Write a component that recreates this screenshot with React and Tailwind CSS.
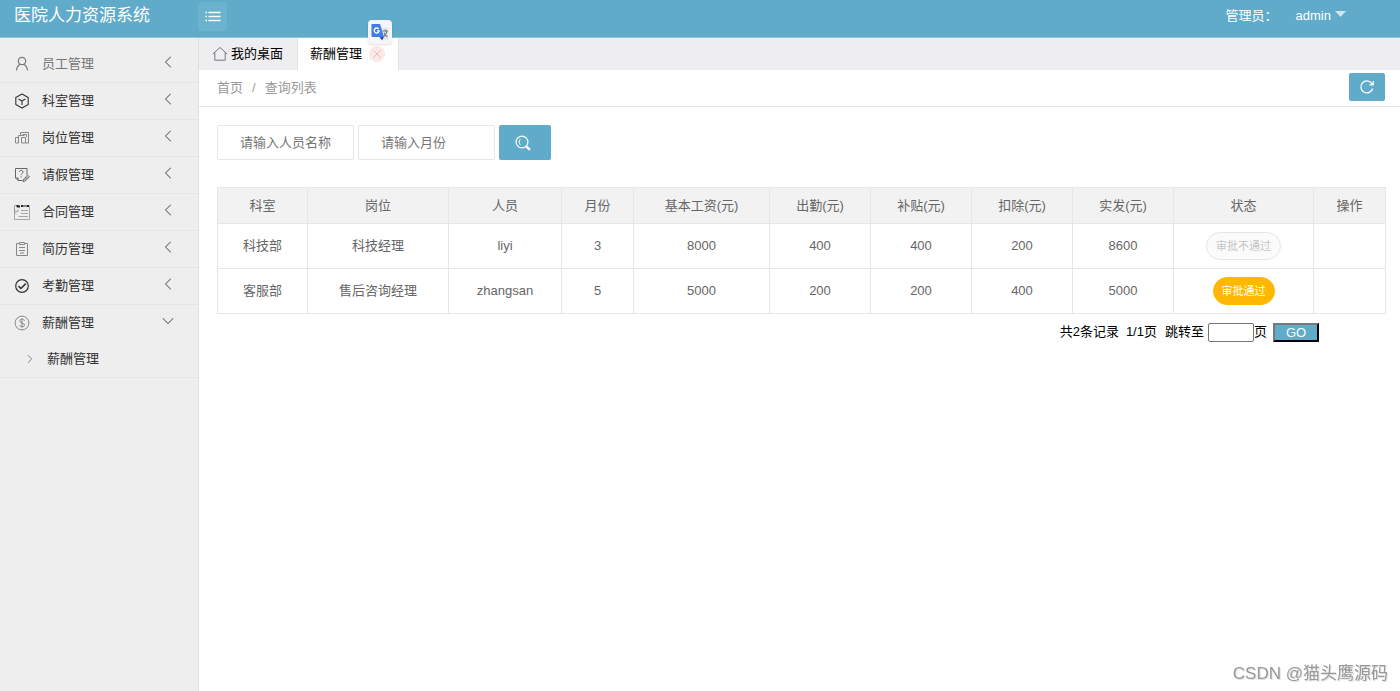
import React from 'react';
import { ChevronDown, ChevronLeft, ChevronRight } from 'lucide-react';

const Icon = ({ children, className = 'w-4 h-4' }) => (
  <svg
    viewBox="0 0 16 16"
    fill="none"
    stroke="currentColor"
    strokeWidth="1"
    strokeLinejoin="round"
    className={className}
    aria-hidden="true"
  >
    {children}
  </svg>
);

const UserIcon = () => (
  <Icon>
    <circle cx="8" cy="5" r="3.700" strokeWidth="1.200" />
    <path d="M2.500 14.500c.2-3.200 1.600-5.200 3.900-6.200M9.600 8.300c2.300 1 3.700 3 3.900 6.200" strokeWidth="1.200" />
  </Icon>
);

const CubeIcon = () => (
  <Icon>
    <path d="M8 1 14.200 4.500v7L8 15 1.800 11.500v-7zM4.500 6 8 8l3.500-2M8 8v4" strokeWidth="1.100" />
  </Icon>
);

const PostIcon = () => (
  <Icon>
    <path d="M1.500 7.500h3V13h-3zM4.500 13V5.500h6M6.500 5.500V2.500h8V13h-3M7.500 7.500h4V13h-4zM8.500 4.500h4V7" />
  </Icon>
);

const LeaveIcon = () => (
  <Icon>
    <path d="M8.500 13.500H4.200L1.500 11V1.500h11.500V8M1.500 11h2.700v2.500" />
    <path d="M5.300 5c.2-2.200 3.800-2 3.700.1C8.900 6.600 7.200 6.500 7.200 8.200M7.200 9.300v1.200" />
    <path d="m9 14.500.5-2.300 4.200-4 1.700 1.700-4.300 4.100zM10.500 13l3.500-3.500" />
  </Icon>
);

const ContractIcon = () => (
  <Icon>
    <path d="M3 1.500H.5v14h15v-14M.5 4.500v3h3.500V5.500M.5 8.500l2 1.500M7 6.500h7M7 9.500h7M4.500 12.500H14" opacity=".7" />
    <path d="M3.500 1v1.500H6M7 2h2.500M10.500 2h1M12.500 2H15" stroke="#222" strokeWidth="2" />
  </Icon>
);

const ResumeIcon = () => (
  <Icon>
    <path d="M5.500 2.500h-3v12h11v-12h-3M5.500 1.500h5v2h-5zM5 6.500h6M5 9.500h6M6 12h4" />
  </Icon>
);

const CheckIcon = () => (
  <Icon>
    <circle cx="8" cy="8" r="6.300" strokeWidth="1.200" />
    <path d="m4.500 8.200 2.400 2.300 4.900-4.900" strokeWidth="1.600" />
  </Icon>
);

const MoneyIcon = () => (
  <Icon>
    <circle cx="8" cy="8" r="6.900" />
    <path d="M10.500 5.800C10 3.700 5.700 3.800 5.700 6c0 2.300 4.800 1.600 4.800 4.100 0 2.200-4.500 2.300-5-.1M8 3.200v9.600" />
  </Icon>
);

const menu = [
  { label: '员工管理', icon: UserIcon, tone: 'text-[#777]' },
  { label: '科室管理', icon: CubeIcon, tone: 'text-[#333]' },
  { label: '岗位管理', icon: PostIcon, tone: 'text-[#333]', iconTone: 'text-[#888]' },
  { label: '请假管理', icon: LeaveIcon, tone: 'text-[#333]', iconTone: 'text-[#666]' },
  { label: '合同管理', icon: ContractIcon, tone: 'text-[#333]', iconTone: 'text-[#888]' },
  { label: '简历管理', icon: ResumeIcon, tone: 'text-[#333]', iconTone: 'text-[#888]' },
  { label: '考勤管理', icon: CheckIcon, tone: 'text-[#333]' },
  { label: '薪酬管理', icon: MoneyIcon, tone: 'text-[#333]', iconTone: 'text-[#888]', children: ['薪酬管理'] },
];

const columns = [
  { title: '科室', width: 'w-[90px]' },
  { title: '岗位', width: 'w-[141px]' },
  { title: '人员', width: 'w-[113px]' },
  { title: '月份', width: 'w-[72px]' },
  { title: '基本工资(元)', width: 'w-[136px]' },
  { title: '出勤(元)', width: 'w-[101px]' },
  { title: '补贴(元)', width: 'w-[101px]' },
  { title: '扣除(元)', width: 'w-[101px]' },
  { title: '实发(元)', width: 'w-[101px]' },
  { title: '状态', width: 'w-[140px]' },
  { title: '操作', width: 'w-[72px]' },
];

const rows = [
  { cells: ['科技部', '科技经理', 'liyi', '3', '8000', '400', '400', '200', '8600'], passed: false },
  { cells: ['客服部', '售后咨询经理', 'zhangsan', '5', '5000', '200', '200', '400', '5000'], passed: true },
];

const Header = () => (
  <header className="flex h-[38px] items-start bg-[#5fabc9] border-b border-[#8fc3d8] text-white">
    <div className="w-[198px] shrink-0 pl-3.5 text-[17px] leading-8">医院人力资源系统</div>
    <button type="button" aria-label="收起菜单" className="mt-0.5 flex h-[29px] w-[29px] items-center justify-center rounded-xs bg-[#6bb2ce]">
      <Icon>
        <path d="M3.500 3.500h12M3.500 7.500h12M3.500 11.500h12M.5 3.500h1.500M.5 7.500h1.500M.5 11.500h1.500" strokeWidth="1.300" />
      </Icon>
    </button>
    <div className="ml-auto flex items-center pr-[54px] leading-[31px]">
      <span className="w-[70px]">管理员：</span>
      <button type="button" className="flex items-center gap-1">
        admin
        <svg viewBox="0 0 11 6" className="mb-1 h-1.5 w-[11px] fill-white/70" aria-hidden="true">
          <path d="M0 0h11L5.500 6z" />
        </svg>
      </button>
    </div>
  </header>
);

const Sidebar = () => (
  <nav className="w-[199px] shrink-0 border-r border-[#e0e0e0] bg-[#eee] pt-2">
    <ul>
      {menu.map(({ label, icon: MenuIcon, tone, iconTone = '', children }) => (
        <li key={label} className="border-b border-[#e4e4e4]">
          <button type="button" className={`flex h-9 w-full items-center pl-3.5 pr-5 ${tone}`}>
            <span className={`mr-3 ${iconTone}`}>
              <MenuIcon />
            </span>
            {label}
            {children ? (
              <ChevronDown size={20} strokeWidth={1.25} className="mb-1 ml-auto text-[#666]" />
            ) : (
              <ChevronLeft size={20} strokeWidth={1.25} className="mb-1 ml-auto text-[#666]" />
            )}
          </button>
          {children?.map((child) => (
            <a key={child} href="#salary" className="flex h-9 items-center gap-2.5 pl-[23px] text-[#333]">
              <ChevronRight size={14} strokeWidth={1.5} className="text-[#777]" />
              {child}
            </a>
          ))}
        </li>
      ))}
    </ul>
  </nav>
);

const TranslateBadge = () => (
  <div className="absolute -top-[18px] left-[70px] flex h-6 w-6 items-center justify-center rounded-sm bg-[#f6f6f8] shadow">
    <svg viewBox="0 0 18 18" className="h-[18px] w-[18px]" aria-hidden="true">
      <path d="M8 4.500h9.500v12H11z" fill="#e6e7ea" />
      <path d="M.5 1H9l4 13H1.500a1 1 0 0 1-1-1z" fill="#3f7de8" />
      <path d="M8.500 14H13l-2 3.500z" fill="#2456b8" />
      <path d="M7.700 6A2.500 2.500 0 1 0 8.200 7.800H6" fill="none" stroke="#fff" strokeWidth="1.300" />
      <path d="M11.500 8h5.500M14.300 6.500V8M16 8c-.4 2.400-1.700 4.400-3.200 5.500M13 9.800c.7 1.700 1.900 3 3.500 3.900" fill="none" stroke="#6b7480" strokeWidth="1.100" />
    </svg>
  </div>
);

const Tabs = () => (
  <div className="flex h-8 bg-[#eeeef0]">
    <a href="#desktop" className="flex w-[99px] items-center gap-[3px] border-r border-[#e2e2e2] pl-[13px] text-black">
      <Icon className="h-4 w-4 text-[#777]">
        <path d="M.8 8 8 1.500 15.200 8M2.800 6.500v7.700h10.400V6.500" />
      </Icon>
      我的桌面
    </a>
    <div className="relative flex w-[101px] items-center gap-[7px] border-r border-[#e2e2e2] bg-white pl-3 text-black">
      薪酬管理
      <button type="button" aria-label="关闭" className="flex h-4 w-4 items-center justify-center rounded-full bg-[#fbe9e6] text-[#d3b0ad]">
        <Icon className="h-3 w-3">
          <path d="m3 3 10 10M13 3 3 13" />
        </Icon>
      </button>
      <TranslateBadge />
    </div>
  </div>
);

const Breadcrumb = () => (
  <div className="flex h-[37px] items-center justify-between border-b border-[#e5e5e5] pl-[18px] pr-[15px] text-[#999]">
    <div className="flex gap-[9px]">
      <a href="#home">首页</a>
      <span>/</span>
      <a href="#list">查询列表</a>
    </div>
    <button type="button" aria-label="刷新" className="mb-0.5 flex h-7 w-9 items-center justify-center rounded-xs bg-[#5fabc9] text-white">
      <Icon>
        <path d="M13.700 9.500A6 6 0 1 1 12.600 4.200L14 5.600M14.200 2v3.800h-3.700" strokeWidth="1.300" />
      </Icon>
    </button>
  </div>
);

const SearchForm = () => (
  <form className="flex gap-1" onSubmit={(e) => e.preventDefault()}>
    <input
      type="text"
      aria-label="人员名称"
      placeholder="请输入人员名称"
      className="h-[35px] w-[137px] rounded-xs border border-[#e6e6e6] pl-[22px] placeholder:text-[#757575]"
    />
    <input
      type="text"
      aria-label="月份"
      placeholder="请输入月份"
      className="h-[35px] w-[137px] rounded-xs border border-[#e6e6e6] pl-[22px] placeholder:text-[#757575]"
    />
    <button type="submit" aria-label="搜索" className="flex h-[35px] w-[52px] items-center justify-center rounded-xs bg-[#5fabc9] pr-1 text-white">
      <Icon>
        <circle cx="7" cy="7" r="5.900" strokeWidth="1.200" />
        <path d="M5.300 4.200c-1.500 1.500-1.500 4 0 5.600" />
        <path d="m11.300 11.300 3.700 3.500" strokeWidth="2.400" />
      </Icon>
    </button>
  </form>
);

const Status = ({ passed }) =>
  passed ? (
    <button type="button" className="h-7 rounded-full border border-[#ffb800] bg-[#ffb800] px-2 text-[11px] text-white">
      审批通过
    </button>
  ) : (
    <button type="button" disabled className="h-7 rounded-full border border-[#e6e6e6] bg-[#fbfbfb] px-[9px] text-[11px] text-[#c4c4c4]">
      审批不通过
    </button>
  );

const SalaryTable = () => (
  <table className="mt-[27px] w-full table-fixed border-collapse text-center text-[#666]">
    <thead>
      <tr className="h-9 bg-[#f2f2f2]">
        {columns.map((col) => (
          <th key={col.title} className={`border border-[#e6e6e6] font-normal ${col.width}`}>
            {col.title}
          </th>
        ))}
      </tr>
    </thead>
    <tbody>
      {rows.map((row) => (
        <tr key={row.cells[2]} className="h-[45px]">
          {row.cells.map((cell, i) => (
            <td key={i} className="border border-[#e6e6e6]">{cell}</td>
          ))}
          <td className="border border-[#e6e6e6]">
            <Status passed={row.passed} />
          </td>
          <td className="border border-[#e6e6e6]" />
        </tr>
      ))}
    </tbody>
  </table>
);

const Pagination = () => (
  <div className="mt-2 flex items-center justify-end pr-[66px] text-black">
    <span className="mr-[7px]">共2条记录</span>
    <span className="mr-2">1/1页</span>
    <label className="flex items-center">
      跳转至
      <input type="text" className="ml-1 h-[19px] w-[46px] rounded-xs border border-[#767676] bg-white" />
      页
    </label>
    <button type="button" className="ml-1.5 h-[19px] w-[46px] border-2 border-t-[#76797b] border-l-[#76797b] border-r-black border-b-black bg-[#5fabc9] leading-[15px] text-white">
      GO
    </button>
  </div>
);

const App = () => (
  <div className="flex min-h-screen flex-col bg-white font-['Liberation_Sans','Noto_Sans_CJK_SC',sans-serif] text-[13px] leading-5">
    <Header />
    <div className="flex flex-1">
      <Sidebar />
      <main className="min-w-0 flex-1">
        <Tabs />
        <Breadcrumb />
        <div className="pt-[18px] pl-[18px] pr-[15px]">
          <SearchForm />
          <SalaryTable />
          <Pagination />
        </div>
      </main>
    </div>
    <div className="fixed right-3 bottom-[3px] text-[17px] leading-7 text-[#999] [text-shadow:1px_1px_1px_#ddd]">
      CSDN @猫头鹰源码
    </div>
  </div>
);

export default App;
